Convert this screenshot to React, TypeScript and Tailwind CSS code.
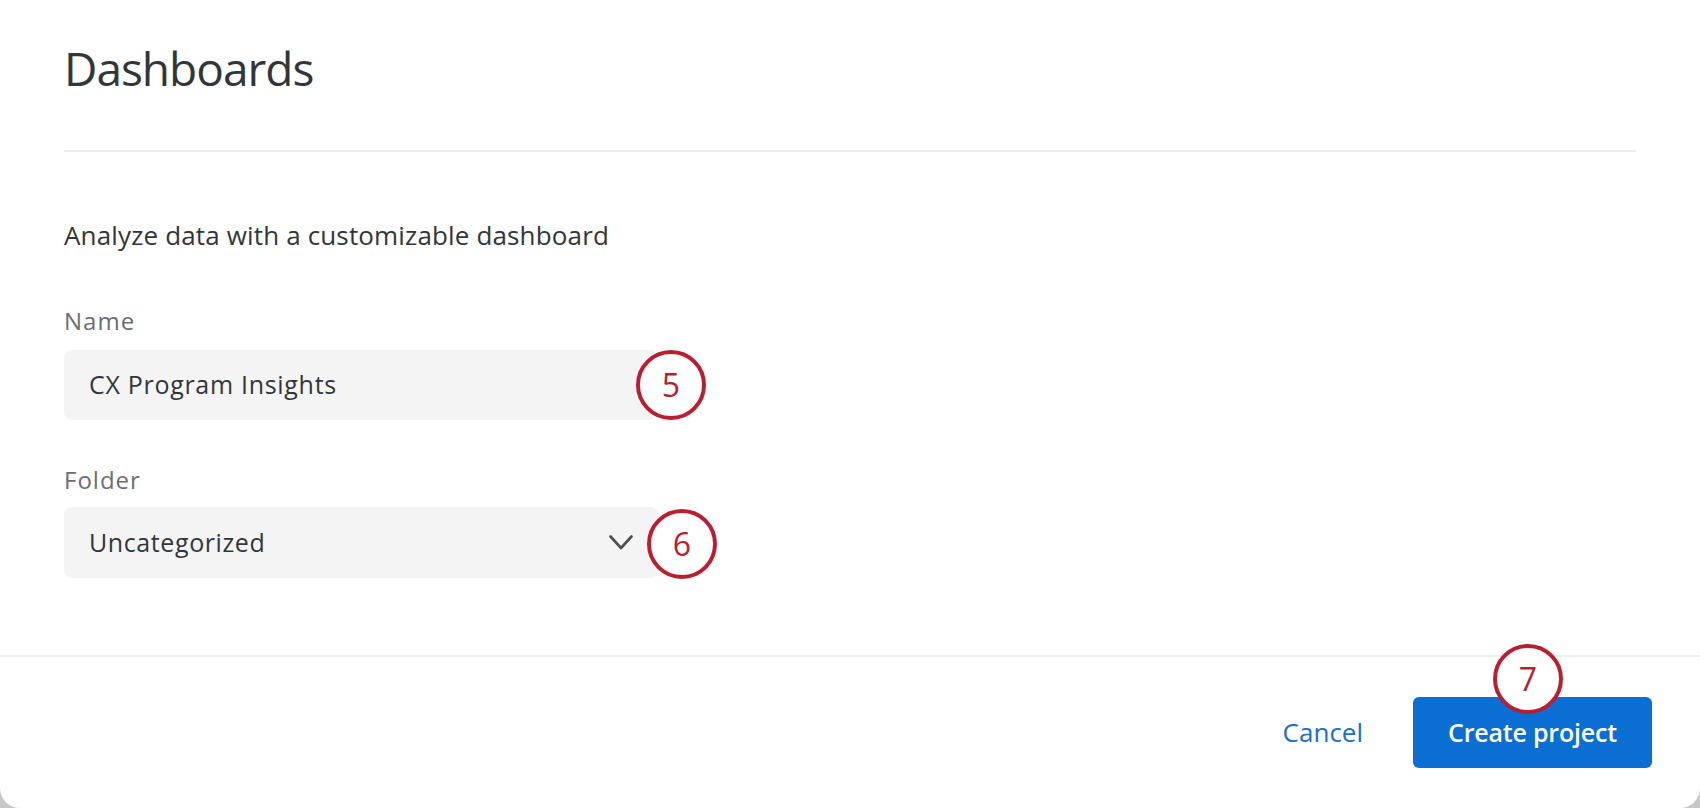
import { FC } from "react";

const font = { fontFamily: '"Open Sans", "Noto Sans", Arial, sans-serif' };

const Marker: FC<{ n: number; className: string }> = ({ n, className }) => (
  <div
    className={`absolute flex h-[70px] w-[70px] items-center justify-center rounded-full border-[4px] border-[#b8202f] bg-white text-[32px] leading-none text-[#b8202f] ${className}`}
  >
    {n}
  </div>
);

const App: FC = () => {
  return (
    <div className="h-[808px] w-full bg-[#c7c7c7]" style={font}>
      <div className="flex h-full flex-col rounded-b-[20px] bg-white">
        {/* header */}
        <div className="px-[64px] pt-[40px]">
          <h1 className="text-[46px] leading-[56px] tracking-[-1px] text-[#32363a]">Dashboards</h1>
          <div className="mt-[54px] h-[2px] bg-[#ededed]" />
        </div>

        {/* body */}
        <div className="flex-1 px-[64px] pt-[65px]">
          <p className="text-[26px] leading-[36px] tracking-[0.15px] text-[#32363a]">Analyze data with a customizable dashboard</p>

          <label className="mt-[52px] block text-[24px] leading-[32px] tracking-[1px] text-[#6b6e72]">Name</label>
          <div className="relative mt-[13px] flex h-[70px] w-[594px] items-center rounded-[8px] bg-[#f4f4f4] pl-[25px] text-[25px] tracking-[0.7px] text-[#32363a]">
            CX Program Insights
            <Marker n={5} className="left-[572px] top-[0px] tracking-normal" />
          </div>

          <label className="mt-[44px] block text-[24px] leading-[32px] tracking-[1px] text-[#6b6e72]">Folder</label>
          <div className="relative mt-[11px] flex h-[71px] w-[594px] items-center justify-between rounded-[8px] bg-[#f4f4f4] pl-[25px] pr-[25px] text-[25px] tracking-[0.6px] text-[#32363a]">
            <span>Uncategorized</span>
            <svg width="24" height="15" viewBox="0 0 24 15" fill="none">
              <polyline points="1.5,1.5 12,13 22.5,1.5" stroke="#4b4f54" strokeWidth="2.6" strokeLinecap="round" strokeLinejoin="round" />
            </svg>
            <Marker n={6} className="left-[583px] top-[2px] tracking-normal" />
          </div>
        </div>

        {/* footer */}
        <div className="flex h-[153px] items-center justify-end gap-[50px] border-t-2 border-[#ededed] pr-[48px]">
          <button className="text-[26px] font-medium text-[#1a6fcc]">Cancel</button>
          <button className="relative h-[71px] w-[239px] rounded-[6px] bg-[#0b6ed2] text-[25px] font-semibold tracking-[-0.2px] text-white">
            Create project
            <Marker n={7} className="left-[80px] top-[-53px] font-normal tracking-normal" />
          </button>
        </div>
      </div>
    </div>
  );
};

export default App;
